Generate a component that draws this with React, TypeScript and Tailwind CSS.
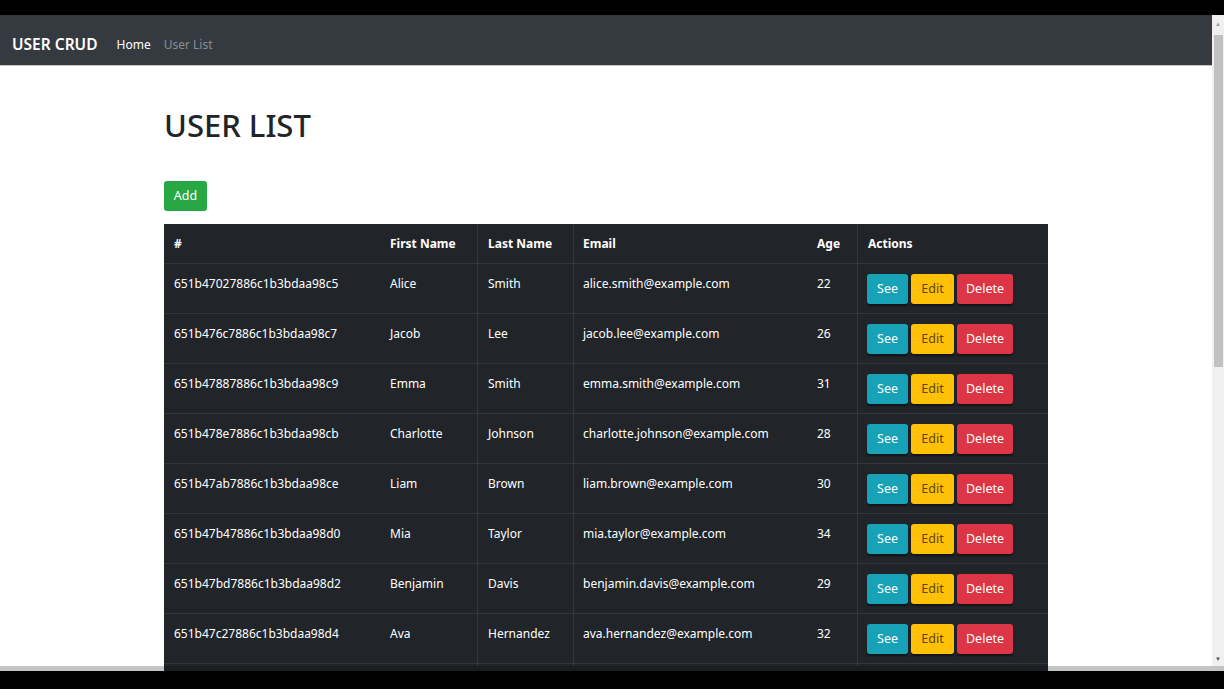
import type { FC } from "react";

interface User {
  id: string;
  firstName: string;
  lastName: string;
  email: string;
  age: number;
}

const users: User[] = [
  { id: "651b47027886c1b3bdaa98c5", firstName: "Alice", lastName: "Smith", email: "alice.smith@example.com", age: 22 },
  { id: "651b476c7886c1b3bdaa98c7", firstName: "Jacob", lastName: "Lee", email: "jacob.lee@example.com", age: 26 },
  { id: "651b47887886c1b3bdaa98c9", firstName: "Emma", lastName: "Smith", email: "emma.smith@example.com", age: 31 },
  { id: "651b478e7886c1b3bdaa98cb", firstName: "Charlotte", lastName: "Johnson", email: "charlotte.johnson@example.com", age: 28 },
  { id: "651b47ab7886c1b3bdaa98ce", firstName: "Liam", lastName: "Brown", email: "liam.brown@example.com", age: 30 },
  { id: "651b47b47886c1b3bdaa98d0", firstName: "Mia", lastName: "Taylor", email: "mia.taylor@example.com", age: 34 },
  { id: "651b47bd7886c1b3bdaa98d2", firstName: "Benjamin", lastName: "Davis", email: "benjamin.davis@example.com", age: 29 },
  { id: "651b47c27886c1b3bdaa98d4", firstName: "Ava", lastName: "Hernandez", email: "ava.hernandez@example.com", age: 32 },
];

const font = { fontFamily: '"Noto Sans", "Open Sans", sans-serif' };

const Row: FC<{ user: User }> = ({ user }) => {
  return (
    <div className="flex h-[50px] shrink-0 border-t border-[#32383e] text-[12px] text-white">
      <div className="w-[216px] px-[10px] pt-[11px]">{user.id}</div>
      <div className="w-[97px] px-[10px] pt-[11px]">{user.firstName}</div>
      <div className="w-[96px] border-l border-[#32383e] px-[10px] pt-[11px]">{user.lastName}</div>
      <div className="w-[234px] border-l border-[#32383e] pl-[9px] pr-[10px] pt-[11px]">{user.email}</div>
      <div className="w-[50px] px-[10px] pt-[11px]">{user.age}</div>
      <div className="flex flex-1 items-start gap-[3px] border-l border-[#32383e] px-[9px] pt-[10px]">
        <button className="h-[30px] w-[41px] rounded-[3px] bg-[#17a2b8] text-[12.5px] text-white shadow-[0_2px_2px_rgba(0,0,0,0.5)]">See</button>
        <button className="h-[30px] w-[43px] rounded-[3px] bg-[#ffc107] text-[12.5px] text-[#5a4300] shadow-[0_2px_2px_rgba(0,0,0,0.5)]">Edit</button>
        <button className="h-[30px] w-[56px] rounded-[3px] bg-[#dc3545] text-[12.5px] text-white shadow-[0_2px_2px_rgba(0,0,0,0.5)]">Delete</button>
      </div>
    </div>
  );
};

const App: FC = () => {
  return (
    <div className="flex h-[689px] w-[1224px] flex-col overflow-hidden bg-black" style={font}>
      <div className="h-[15px] shrink-0 bg-black" />
      <div className="flex h-[651px] shrink-0">
        <div className="flex flex-1 flex-col overflow-hidden bg-white">
          <nav className="flex h-[51px] shrink-0 items-center gap-[19px] border-b border-[#c8c8c8] bg-[#343a40] px-[12px] pt-[9px]">
            <span className="text-[15.5px] font-semibold text-white">USER CRUD</span>
            <div className="flex items-center gap-[13px] text-[12px]">
              <span className="text-white">Home</span>
              <span className="text-[#8a8f94]">User List</span>
            </div>
          </nav>
          <div className="flex flex-col pl-[164px]">
            <h1 className="mt-[39px] text-[31px] font-medium leading-[40px] text-[#212529]">USER LIST</h1>
            <button className="mt-[36px] h-[30px] w-[43px] rounded-[3px] bg-[#28a745] text-[12.5px] text-white">Add</button>
            <div className="mt-[13px] flex w-[884px] flex-col bg-[#212529]">
              <div className="flex h-[39px] shrink-0 items-center text-[12px] font-bold text-white">
                <div className="w-[216px] px-[10px]">#</div>
                <div className="w-[97px] px-[10px]">First Name</div>
                <div className="flex h-full w-[96px] items-center border-l border-[#32383e] px-[10px]">Last Name</div>
                <div className="flex h-full w-[234px] items-center border-l border-[#32383e] pl-[9px] pr-[10px]">Email</div>
                <div className="w-[50px] px-[10px]">Age</div>
                <div className="flex h-full flex-1 items-center border-l border-[#32383e] px-[10px]">Actions</div>
              </div>
              {users.map((user) => (
                <Row key={user.id} user={user} />
              ))}
              <div className="flex h-[40px] shrink-0 border-t border-[#32383e]">
                <div className="w-[313px]" />
                <div className="w-[96px] border-l border-[#32383e]" />
                <div className="w-[284px] border-l border-[#32383e]" />
                <div className="flex-1 border-l border-[#32383e]" />
              </div>
            </div>
          </div>
        </div>
        <div className="flex w-[12px] flex-col items-center bg-[#f0f0f0]">
          <span className="mt-[6px] text-[6px] leading-[6px] text-[#a0a0a0]">▲</span>
          <div className="mt-[8px] h-[332px] w-[9px] bg-[#c1c1c1]" />
          <div className="flex-1" />
          <span className="mb-[4px] text-[6px] leading-[6px] text-[#505050]">▼</span>
        </div>
      </div>
      <div className="flex h-[5px] shrink-0">
        <div className="w-[164px] bg-[#c4c4c4]" />
        <div className="w-[884px] bg-[#1b1e21]" />
        <div className="flex-1 bg-[#c4c4c4]" />
      </div>
      <div className="flex-1 bg-black" />
    </div>
  );
};

export default App;
